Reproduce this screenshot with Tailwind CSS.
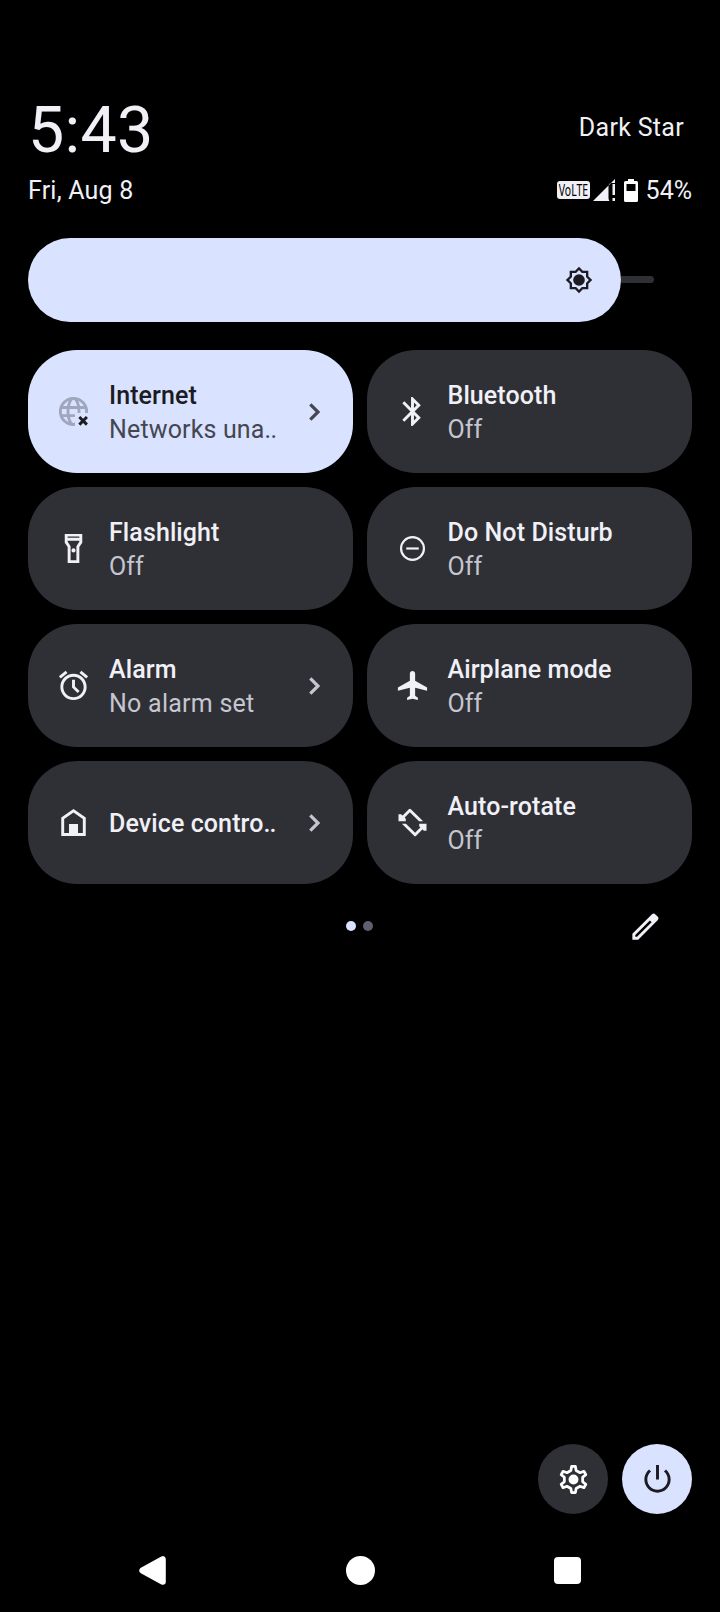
<!DOCTYPE html>
<html lang="en">
<head>
    <meta charset="UTF-8">
    <meta name="viewport" content="width=device-width, initial-scale=1.0">
    <title>Quick Settings</title>
    <script src="https://cdn.jsdelivr.net/npm/@tailwindcss/browser@4"></script>
</head>
<body class="bg-black font-['Roboto',sans-serif] text-[25px] text-[#f1f0f7]">
    <div class="flex flex-col w-[720px] h-[1612px] px-7 overflow-hidden">

        <!-- Clock and carrier -->
        <header class="pt-[92px]">
            <div class="flex justify-between h-[76px]">
                <div class="text-[64.5px] leading-[76px] tracking-[0.3px]">5:43</div>
                <div class="pt-[18px] pr-2 leading-[36px] tracking-[0.3px]">Dark Star</div>
            </div>
            <div class="flex justify-between items-center h-[44px]">
                <div class="pt-0.5 leading-[30px] tracking-[0.2px]">Fri, Aug 8</div>
                <div class="flex items-center">
                    <svg class="w-[33px] h-[18px] mr-[3px]" viewBox="0 0 33 18">
                        <rect width="33" height="18" rx="3" fill="#f1f0f7"/>
                        <text transform="translate(1.8 14.6) scale(.76 1)" font-family="Noto Sans, sans-serif" font-size="16" textLength="38.5" lengthAdjust="spacingAndGlyphs" fill="#000">VoLTE</text>
                    </svg>
                    <svg class="w-[22px] h-[22px] mr-[9px]" viewBox="0 0 22 22" fill="#f1f0f7">
                        <path d="M0 22L22 0v4h-4.5q-2 1-2 3v12q0 2 1 3z"/>
                        <path d="M19.5 5H22v11h-2.5zM19.5 19H22v3h-2.5z"/>
                    </svg>
                    <svg class="w-[14px] h-[23px] mr-2" viewBox="0 0 14 23" fill="#fff">
                        <path fill-rule="evenodd" d="M4 0h6v2h2.5Q14 2 14 3.5v18q0 1.5-1.5 1.5h-11Q0 23 0 21.5v-18Q0 2 1.5 2H4zM2.5 5v7h9V5z"/>
                    </svg>
                    <span class="pt-0.5 leading-[30px]">54%</span>
                </div>
            </div>
        </header>

        <!-- Brightness -->
        <div class="flex items-center mt-[26px] h-[84px]">
            <div class="flex items-center justify-end w-[593px] h-[84px] pr-7 rounded-full bg-[#d9e2ff]">
                <svg class="w-7 h-7" viewBox="0 0 24 24" fill="#1b1b21">
                    <path d="M20 8.690V4h-4.690L12 .690 8.690 4H4v4.690L.690 12 4 15.310V20h4.690L12 23.310 15.310 20H20v-4.690L23.310 12 20 8.690zm-2 5.790V18h-3.520L12 20.480 9.520 18H6v-3.520L3.520 12 6 9.520V6h3.520L12 3.520 14.480 6H18v3.520L20.480 12 18 14.480z"/>
                    <circle cx="12" cy="12" r="5"/>
                </svg>
            </div>
            <div class="w-[33px] h-[7px] mb-px rounded-r-full bg-[#2f3036]"></div>
        </div>

        <!-- Tiles -->
        <main class="grid grid-cols-2 gap-[14px] mt-7 leading-[34px] tracking-[0.1px]">
            <div class="flex items-center h-[123px] px-7 rounded-[49px] bg-[#d9e2ff] text-[#1b1b21]">
                <svg class="w-[35px] h-[35px] mr-[18px] shrink-0" viewBox="0 0 24 24" fill="none" stroke-width="2">
                    <clipPath id="globe"><path d="M0 0H24V13H13V24H0z"/></clipPath>
                    <g stroke="#a0a7bc" clip-path="url(#globe)">
                        <circle cx="12" cy="12" r="9"/>
                        <ellipse cx="12" cy="12" rx="3.8" ry="9"/>
                        <path d="M3 9.2h18M3 14.8h18"/>
                    </g>
                    <path stroke="#1b1b21" d="M16 15.8l5.2 5.2M21.2 15.8L16 21"/>
                </svg>
                <div class="grow pt-0.5">
                    <div class="font-medium">Internet</div>
                    <div class="text-[#45464f] tracking-[0.15px]">Networks una<span class="tracking-[-0.6px]">..</span></div>
                </div>
                <svg class="w-[11px] h-[18px] mr-[5px]" viewBox="0 0 11 18" fill="none" stroke="#45464f" stroke-width="3.2"><path d="M1.3 1.3L9 9l-7.7 7.7"/></svg>
            </div>

            <div class="flex items-center h-[123px] px-7 rounded-[49px] bg-[#2f3036]">
                <svg class="w-[35px] h-[35px] mr-[17.5px] shrink-0" viewBox="0 0 24 24" fill="currentColor">
                    <path d="M17.710 7.710L12 2h-1v7.590L6.410 5 5 6.410 10.590 12 5 17.590 6.410 19 11 14.410V22h1l5.710-5.710-4.300-4.290 4.300-4.290zM13 5.830l1.880 1.880L13 9.590V5.830zm1.880 10.460L13 18.170v-3.760l1.880 1.880z"/>
                </svg>
                <div class="grow pt-0.5">
                    <div class="font-medium">Bluetooth</div>
                    <div class="text-[#c5c6d0]">Off</div>
                </div>
            </div>

            <div class="flex items-center h-[123px] px-7 rounded-[49px] bg-[#2f3036]">
                <svg class="w-[35px] h-[35px] mr-[18px] shrink-0" viewBox="0 0 24 24" fill="currentColor">
                    <path fill-rule="evenodd" d="M6 2v6l2 3v11h8V11l2-3V2H6zm10 1.7v1H8v-1h8zm-2 6.7V20h-4v-9.6l-2-3v-.8h8v.8l-2 3z"/>
                    <circle cx="12" cy="13.3" r="1.4"/>
                </svg>
                <div class="grow pt-0.5">
                    <div class="font-medium">Flashlight</div>
                    <div class="text-[#c5c6d0]">Off</div>
                </div>
            </div>

            <div class="flex items-center h-[123px] px-7 rounded-[49px] bg-[#2f3036]">
                <svg class="w-[35px] h-[35px] mr-[17.5px] shrink-0" viewBox="0 0 24 24" fill="none" stroke="currentColor" stroke-width="1.5">
                    <circle cx="12" cy="12" r="7.85"/>
                    <path d="M7.7 12h8.6"/>
                </svg>
                <div class="grow pt-0.5">
                    <div class="font-medium">Do Not Disturb</div>
                    <div class="text-[#c5c6d0]">Off</div>
                </div>
            </div>

            <div class="flex items-center h-[123px] px-7 rounded-[49px] bg-[#2f3036]">
                <svg class="w-[35px] h-[35px] mr-[18px] shrink-0" viewBox="0 0 24 24" fill="currentColor">
                    <path d="M22 5.720l-4.600-3.860-1.290 1.530 4.600 3.860L22 5.720zM7.880 3.390L6.600 1.860 2 5.710l1.290 1.530 4.590-3.850zM13 8h-2v5.400l3.800 3.800 1.400-1.400-3.200-3.200V8zM12 4c-4.970 0-9 4.030-9 9s4.020 9 9 9c4.970 0 9-4.030 9-9s-4.030-9-9-9zm0 16c-3.870 0-7-3.130-7-7s3.130-7 7-7 7 3.130 7 7-3.130 7-7 7z"/>
                </svg>
                <div class="grow pt-0.5">
                    <div class="font-medium">Alarm</div>
                    <div class="text-[#c5c6d0] tracking-[0.25px]">No alarm set</div>
                </div>
                <svg class="w-[11px] h-[18px] mr-[5px]" viewBox="0 0 11 18" fill="none" stroke="#c5c6d0" stroke-width="3.2"><path d="M1.3 1.3L9 9l-7.7 7.7"/></svg>
            </div>

            <div class="flex items-center h-[123px] px-7 rounded-[49px] bg-[#2f3036]">
                <svg class="w-[35px] h-[35px] mr-[17.5px] shrink-0" viewBox="0 0 24 24" fill="currentColor">
                    <path d="M22 15.6v-2.2l-8.2-4.7V3.8C13.8 2.7 13 2 12 2s-1.8.7-1.8 1.8v4.9L2 13.4v2.2l8.200-2.1V19l-1.9 1.4V22l3.7-1 3.7 1v-1.6L13.8 19v-5.5L22 15.6z"/>
                </svg>
                <div class="grow pt-0.5">
                    <div class="font-medium">Airplane mode</div>
                    <div class="text-[#c5c6d0]">Off</div>
                </div>
            </div>

            <div class="flex items-center h-[123px] px-7 rounded-[49px] bg-[#2f3036]">
                <svg class="w-[35px] h-[35px] mr-[18px] shrink-0" viewBox="0 0 24 24" fill="currentColor">
                    <path fill-rule="evenodd" d="M12 2.8L3.6 8.5V21.2h16.8V8.5zM5.6 19.2V9.6L12 5.2l6.4 4.4v9.6h-3.3v-6.2H8.9v6.2z"/>
                </svg>
                <div class="grow pt-0.5 font-medium">Device contro<span class="tracking-[-0.9px]">..</span></div>
                <svg class="w-[11px] h-[18px] mr-[5px]" viewBox="0 0 11 18" fill="none" stroke="#c5c6d0" stroke-width="3.2"><path d="M1.3 1.3L9 9l-7.7 7.7"/></svg>
            </div>

            <div class="flex items-center h-[123px] px-7 rounded-[49px] bg-[#2f3036]">
                <svg class="w-[35px] h-[35px] mr-[17.5px] shrink-0" viewBox="0 0 24 24" fill="currentColor">
                    <g id="turn">
                        <path d="M4.4 8L9.5 2.9q.7-.7 1.4 0L19.3 11.1h-2.8L10.2 4.9 6 9.2z"/>
                        <path d="M2.4 6.3H4.2L7.4 9.5v1.6h-5z"/>
                    </g>
                    <use href="#turn" transform="rotate(180 12 12)"/>
                </svg>
                <div class="grow pt-0.5">
                    <div class="font-medium">Auto-rotate</div>
                    <div class="text-[#c5c6d0]">Off</div>
                </div>
            </div>
        </main>

        <!-- Pager and edit -->
        <div class="grid grid-cols-3 items-center h-[84px]">
            <div class="col-start-2 flex justify-center gap-[7px]">
                <div class="w-[10px] h-[10px] rounded-full bg-[#d9e2ff]"></div>
                <div class="w-[10px] h-[10px] rounded-full bg-[#5e6070]"></div>
            </div>
            <svg class="w-[35px] h-[35px] mr-[28.5px] justify-self-end" viewBox="0 0 24 24" fill="currentColor">
                <path fill-rule="evenodd" d="M3 17L16.3 3.7c.8-.8 1.7-.8 2.5 0l1.5 1.5c.8.8.8 1.7 0 2.5L7 21H3zM5 19h1.2L16.2 9 15 7.8 5 17.8z"/>
            </svg>
        </div>

        <!-- Footer buttons -->
        <footer class="flex justify-end gap-[14px] mt-auto">
            <div class="flex items-center justify-center w-[70px] h-[70px] rounded-full bg-[#2f3036]">
                <svg class="w-[35px] h-[35px]" viewBox="-12 -12 24 24" fill="none" stroke="#fff" stroke-width="1.9" stroke-linejoin="round">
                    <path d="M-1.3-9L1.3-9 1.8-6.2 4.47-4.66 7.14-5.63 8.44-3.37 6.27-1.54 6.27 1.54 8.44 3.37 7.14 5.63 4.47 4.66 1.8 6.2 1.3 9-1.3 9-1.8 6.2-4.47 4.66-7.14 5.63-8.44 3.37-6.27 1.54-6.27-1.54-8.44-3.37-7.14-5.63-4.47-4.66-1.8-6.2z"/>
                    <circle r="3.4" fill="#fff" stroke="none"/>
                </svg>
            </div>
            <div class="flex items-center justify-center w-[70px] h-[70px] rounded-full bg-[#d9e2ff]">
                <svg class="w-[35px] h-[35px]" viewBox="0 0 24 24" fill="#1b1b21">
                    <path d="M13 2h-2v10h2V2zm4.830 3.170l-1.420 1.420C17.990 7.860 19 9.810 19 12c0 3.870-3.130 7-7 7s-7-3.130-7-7c0-2.190 1.010-4.140 2.580-5.420L6.170 5.170C4.230 6.820 3 9.260 3 12c0 4.970 4.030 9 9 9s9-4.030 9-9c0-2.740-1.230-5.180-3.170-6.830z"/>
                </svg>
            </div>
        </footer>

        <!-- Navigation bar -->
        <nav class="flex items-center justify-between h-[84px] mt-[14px] px-[111px]">
            <svg class="w-[27px] h-[29px]" viewBox="0 0 27 29" fill="#fff" stroke="#fff" stroke-width="6" stroke-linejoin="round"><path d="M3.3 14.5L23.8 3.2v22.6z"/></svg>
            <div class="w-[29px] h-[29px] rounded-full bg-white"></div>
            <div class="w-[27px] h-[27px] rounded-[4px] bg-white"></div>
        </nav>
    </div>
</body>
</html>
